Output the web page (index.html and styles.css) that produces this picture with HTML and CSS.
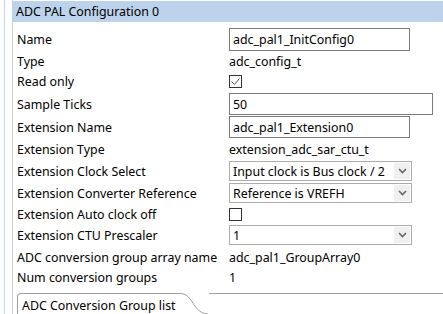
FILE: index.html
```html
<!DOCTYPE html>
<html lang="en">
<head>
<meta charset="UTF-8">
<meta name="viewport" content="width=device-width, initial-scale=1.0">
<link rel="stylesheet" href="styles.css">
<title>ADC PAL Configuration</title>
</head>
<body>

<div class="page">
    <div class="panel">
        <div class="panel-title">ADC PAL Configuration 0</div>

        <div class="props">
            <div class="row r1">
                <span class="label">Name</span>
                <input class="field" type="text" value="adc_pal1_InitConfig0">
            </div>
            <div class="row r2">
                <span class="label">Type</span>
                <span class="value">adc_config_t</span>
            </div>
            <div class="row r3">
                <span class="label">Read only</span>
                <span class="check">
                    <svg width="11" height="11" viewBox="0 0 11 11"><polyline points="1.5,5.5 4.5,8.5 9.5,2.5" fill="none" stroke="#555" stroke-width="1"/></svg>
                </span>
            </div>
            <div class="row r4">
                <span class="label">Sample Ticks</span>
                <input class="field wide" type="text" value="50">
            </div>
            <div class="row r5">
                <span class="label">Extension Name</span>
                <input class="field" type="text" value="adc_pal1_Extension0">
            </div>
            <div class="row r6">
                <span class="label">Extension Type</span>
                <span class="value">extension_adc_sar_ctu_t</span>
            </div>
            <div class="row r7">
                <span class="label">Extension Clock Select</span>
                <div class="combo">
                    <span class="combo-text">Input clock is Bus clock / 2</span>
                    <span class="combo-btn"><svg width="9" height="6" viewBox="0 0 9 6"><polyline points="1,1 4.5,4.5 8,1" fill="none" stroke="#666" stroke-width="1.6"/></svg></span>
                </div>
            </div>
            <div class="row r8">
                <span class="label">Extension Converter Reference</span>
                <div class="combo">
                    <span class="combo-text">Reference is VREFH</span>
                    <span class="combo-btn"><svg width="9" height="6" viewBox="0 0 9 6"><polyline points="1,1 4.5,4.5 8,1" fill="none" stroke="#666" stroke-width="1.6"/></svg></span>
                </div>
            </div>
            <div class="row r9">
                <span class="label">Extension Auto clock off</span>
                <span class="check"></span>
            </div>
            <div class="row r10">
                <span class="label">Extension CTU Prescaler</span>
                <div class="combo">
                    <span class="combo-text">1</span>
                    <span class="combo-btn"><svg width="9" height="6" viewBox="0 0 9 6"><polyline points="1,1 4.5,4.5 8,1" fill="none" stroke="#666" stroke-width="1.6"/></svg></span>
                </div>
            </div>
            <div class="row r11">
                <span class="label">ADC conversion group array name</span>
                <span class="value">adc_pal1_GroupArray0</span>
            </div>
            <div class="row r12">
                <span class="label">Num conversion groups</span>
                <span class="value">1</span>
            </div>
        </div>

        <div class="folder">
            <div class="tab">ADC Conversion Group list</div>
            <svg class="tab-curve" width="28" height="21" viewBox="0 0 28 21"><path d="M0,0.5 C12,0.5 12,21 27,21" fill="none" stroke="#a0a0a0" stroke-width="1"/></svg>
            <div class="strip"></div>
        </div>
    </div>
</div>

</body>
</html>
```

FILE: styles.css
```css
body {
    margin: 0;
    font-family: "Noto Sans", "Liberation Sans", sans-serif;
    font-size: 12.4px;
    color: #000;
    background-color: #fff;
}

.page {
    margin-left: 4px;
    padding-left: 7px;
    height: 314px;
    border-left: 1px solid #c2d5ea;
    overflow: hidden;
}

.panel {
    padding-top: 1px;
    border-left: 1px solid #cfcfcf;
    height: 100%;
}

.panel-title {
    height: 21px;
    line-height: 21px;
    margin-left: -1px;
    padding-left: 4px;
    background-color: #bcd3eb;
}

.props {
    padding-top: 6px;
}

.row {
    display: flex;
    align-items: center;
    padding-left: 4px;
}

.label {
    width: 212px;
    flex-shrink: 0;
    white-space: nowrap;
}

.r1 { height: 23px; }
.r2 { height: 20px; }
.r3 { height: 21px; }
.r4 { height: 22px; margin-top: 1px; }
.r5 { height: 24px; }
.r6 { height: 21px; }
.r7 { height: 20px; margin-top: 1px; }
.r8 { height: 24px; }
.r9 { height: 19px; }
.r10 { height: 22px; }
.r11 { height: 21px; margin-top: 1px; }
.r12 { height: 19px; }

.field {
    box-sizing: border-box;
    width: 181px;
    height: 23px;
    margin: 0;
    padding: 0 3px;
    border: 1px solid #7a7a7a;
    border-radius: 0;
    font-family: inherit;
    font-size: 12.4px;
    color: #000;
    outline: none;
}

.field.wide {
    width: 204px;
    height: 22px;
}

.r5 .field {
    height: 22px;
}

.check {
    box-sizing: border-box;
    width: 13px;
    height: 13px;
    border: 1px solid #333;
    display: flex;
    align-items: center;
    justify-content: center;
}

.combo {
    box-sizing: border-box;
    width: 183px;
    height: 20px;
    border: 1px solid #acacac;
    display: flex;
    align-items: center;
    padding: 1px;
}

.combo-text {
    flex: 1;
    padding-left: 2px;
    white-space: nowrap;
}

.combo-btn {
    width: 16px;
    height: 16px;
    background-color: #f0f0f0;
    display: flex;
    align-items: center;
    justify-content: center;
}

.folder {
    display: flex;
    margin-top: 6px;
    margin-left: 4px;
    height: 21px;
}

.tab {
    box-sizing: border-box;
    height: 21px;
    padding: 3px 0 0 4px;
    border-left: 1px solid #a0a0a0;
    border-top: 1px solid #a0a0a0;
    border-top-left-radius: 4px;
    white-space: nowrap;
    width: 164px;
}

.tab-curve {
    flex-shrink: 0;
}

.strip {
    flex: 1;
    border-top: 1px solid #a0a0a0;
}
```
